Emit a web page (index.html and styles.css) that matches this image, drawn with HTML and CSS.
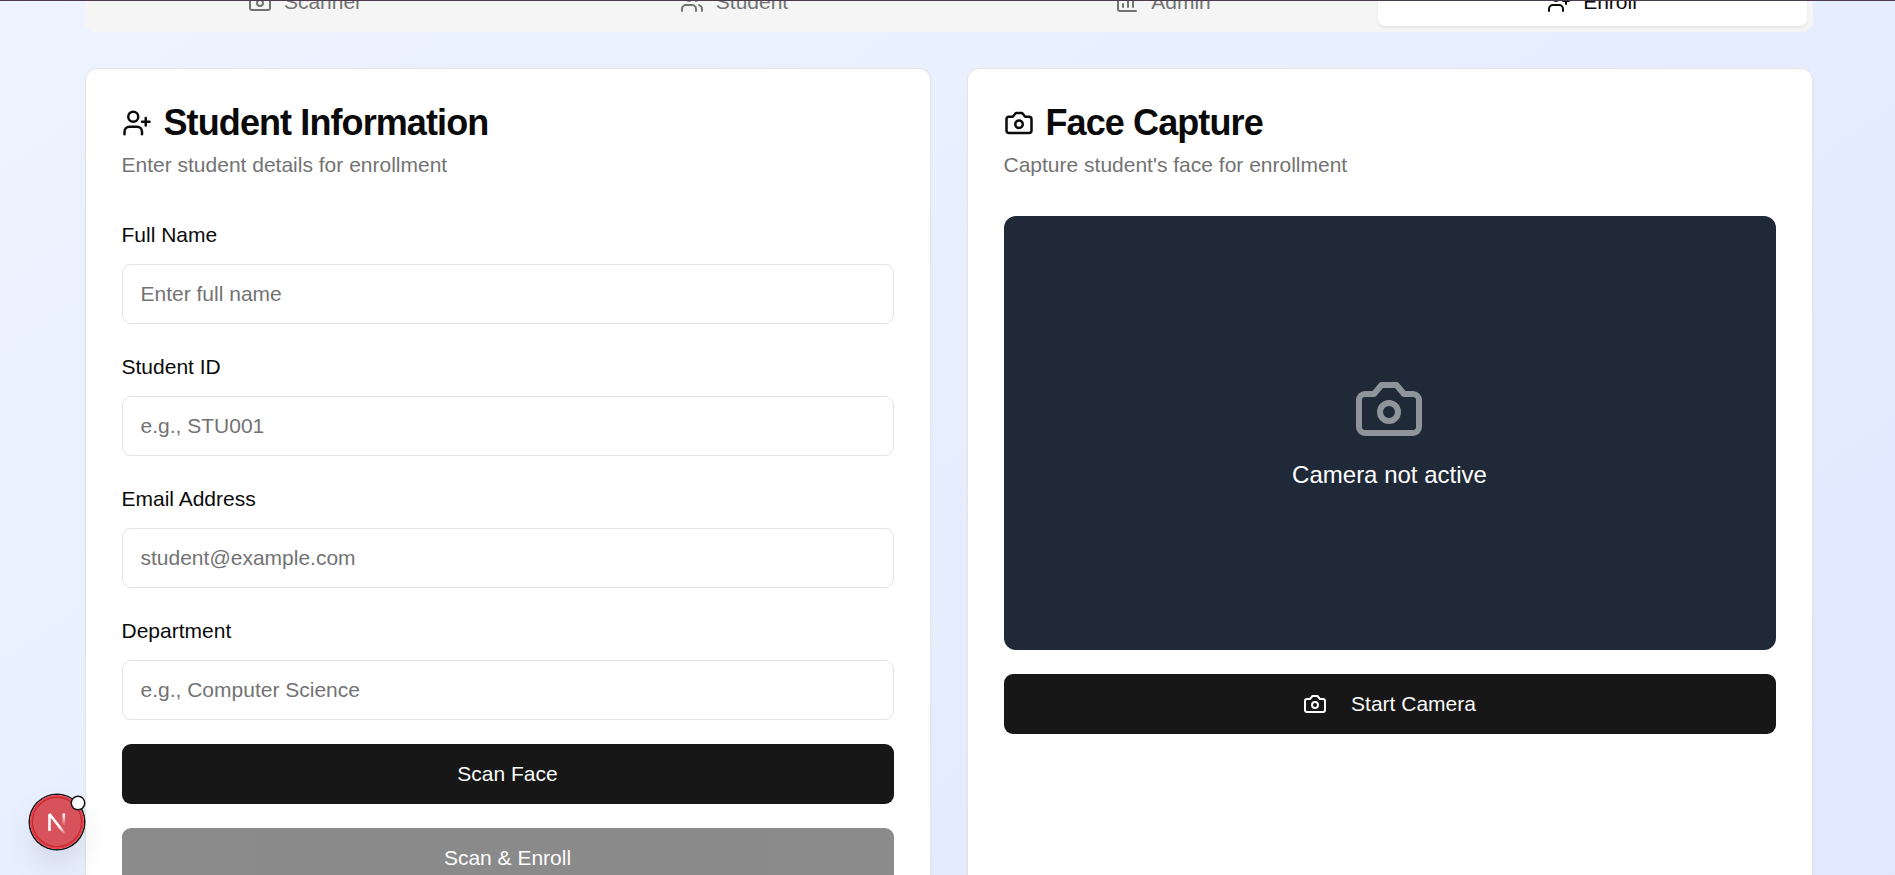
FILE: index.html
```html
<!DOCTYPE html>
<html lang="en">
<head>
<meta charset="utf-8">
<title>Student Enrollment</title>
<link rel="stylesheet" href="styles.css">
</head>
<body>
<svg class="defs" aria-hidden="true">
  <symbol id="camera" viewBox="0 0 24 24"><path d="M14.5 4h-5L7 7H4a2 2 0 0 0-2 2v9a2 2 0 0 0 2 2h16a2 2 0 0 0 2-2V9a2 2 0 0 0-2-2h-3l-2.500-3z"/><circle cx="12" cy="13" r="3"/></symbol>
  <symbol id="users" viewBox="0 0 24 24"><path d="M16 21v-2a4 4 0 0 0-4-4H6a4 4 0 0 0-4 4v2"/><circle cx="9" cy="7" r="4"/><path d="M22 21v-2a4 4 0 0 0-3-3.870"/><path d="M16 3.130a4 4 0 0 1 0 7.750"/></symbol>
  <symbol id="chart" viewBox="0 0 24 24"><path d="M3 3v16a2 2 0 0 0 2 2h16"/><path d="M18 17V9"/><path d="M13 17V5"/><path d="M8 17v-3"/></symbol>
  <symbol id="user-plus" viewBox="0 0 24 24"><path d="M16 21v-2a4 4 0 0 0-4-4H6a4 4 0 0 0-4 4v2"/><circle cx="9" cy="7" r="4"/><path d="M19 8v6"/><path d="M22 11h-6"/></symbol>
</svg>
<div class="page">
  <nav class="tabs">
    <button class="tab"><svg class="icon"><use href="#camera"/></svg>Scanner</button>
    <button class="tab"><svg class="icon"><use href="#users"/></svg>Student</button>
    <button class="tab"><svg class="icon"><use href="#chart"/></svg>Admin</button>
    <button class="tab active"><svg class="icon"><use href="#user-plus"/></svg>Enroll</button>
  </nav>
  <main class="grid">
    <section class="card">
      <header class="card-header">
        <h2 class="title"><svg class="icon icon-md"><use href="#user-plus"/></svg>Student Information</h2>
        <p class="description">Enter student details for enrollment</p>
      </header>
      <form class="stack">
        <div class="field"><div class="label-row"><label for="name">Full Name</label></div><input id="name" placeholder="Enter full name"></div>
        <div class="field"><div class="label-row"><label for="sid">Student ID</label></div><input id="sid" placeholder="e.g., STU001"></div>
        <div class="field"><div class="label-row"><label for="email">Email Address</label></div><input id="email" placeholder="student@example.com"></div>
        <div class="field"><div class="label-row"><label for="dept">Department</label></div><input id="dept" placeholder="e.g., Computer Science"></div>
        <button type="button" class="button">Scan Face</button>
        <button type="button" class="button" disabled>Scan &amp; Enroll</button>
      </form>
    </section>
    <section class="card">
      <header class="card-header">
        <h2 class="title"><svg class="icon icon-md"><use href="#camera"/></svg>Face Capture</h2>
        <p class="description">Capture student's face for enrollment</p>
      </header>
      <div class="stack">
        <div class="video"><svg class="icon icon-lg"><use href="#camera"/></svg><p class="video-text">Camera not active</p></div>
        <button type="button" class="button"><svg class="icon"><use href="#camera"/></svg>Start Camera</button>
      </div>
    </section>
  </main>
</div>
<div class="top-edge"></div>
<div class="dev-badge">
  <svg class="dev-logo" viewBox="0 0 54 54">
    <defs>
      <linearGradient id="diag" gradientUnits="userSpaceOnUse" x1="31" y1="31" x2="36" y2="39"><stop offset="0" stop-color="#fff"/><stop offset="1" stop-color="#fff" stop-opacity="0"/></linearGradient>
      <linearGradient id="stem" gradientUnits="userSpaceOnUse" x1="34" y1="19" x2="34" y2="31"><stop offset="0" stop-color="#fff"/><stop offset="1" stop-color="#fff" stop-opacity="0"/></linearGradient>
    </defs>
    <path d="M19.500 36V19L35 39" fill="none" stroke="url(#diag)" stroke-width="2.600" stroke-linejoin="bevel"/>
    <path d="M33.800 18.500V31" fill="none" stroke="url(#stem)" stroke-width="2.600"/>
  </svg>
  <span class="dev-dot"></span>
</div>
</body>
</html>
```
FILE: styles.css
```css
* { box-sizing: border-box; }
html, body { height: 100%; margin: 0; overflow: hidden; }
body { font-family: "Liberation Sans", Arial, sans-serif; font-size: 24px; line-height: 36px; color: #0a0a0a; }
button, input { font: inherit; }
h2, p { margin: 0; }
.defs { position: absolute; width: 0; height: 0; }
.page {
  height: 875px;
  overflow: hidden;
  padding: 0 82.500px 0 84.500px;
  background: linear-gradient(to bottom right, #eff6ff, #e0e7ff) 0 -330px / 1895px 1340px no-repeat;
}
.icon { width: 24px; height: 24px; flex: none; fill: none; stroke: currentColor; stroke-width: 2; stroke-linecap: round; stroke-linejoin: round; }
.icon-md { width: 30px; height: 30px; }
.icon-lg { width: 72px; height: 72px; opacity: .5; }
.tabs {
  display: grid;
  grid-template-columns: repeat(4, 1fr);
  height: 60px;
  margin-top: -28px;
  margin-bottom: 36px;
  padding: 6px;
  border-radius: 12px;
  background: #f5f5f5;
}
.tab {
  display: flex;
  align-items: center;
  justify-content: center;
  gap: 12px;
  padding: 9px 18px;
  border: 0;
  border-radius: 7px;
  background: none;
  color: #737373;
  font-size: 21px;
  line-height: 30px;
}
.tab.active { background: #fff; color: #0a0a0a; box-shadow: 0 1.5px 3px rgba(0, 0, 0, .07); }
.grid { display: grid; grid-template-columns: 1fr 1fr; gap: 36px; }
.card {
  height: 960px;
  padding: 36px;
  border: 1px solid #e5e5e5;
  border-radius: 12px;
  background: #fff;
  box-shadow: 0 1.5px 3px rgba(0, 0, 0, .05);
}
.card-header { display: flex; flex-direction: column; gap: 9px; margin-bottom: 36px; }
.title { display: flex; align-items: center; gap: 12px; height: 36px; font-size: 36px; line-height: 36px; font-weight: 700; letter-spacing: -0.9px; }
.description { font-size: 21px; line-height: 30px; color: #737373; }
.stack { display: flex; flex-direction: column; gap: 24px; }
.label-row { height: 36px; margin-bottom: 12px; }
.label-row label { font-size: 21px; line-height: 21px; }
.field input {
  display: block;
  width: 100%;
  height: 60px;
  padding: 12px 18px;
  border: 1px solid #e5e5e5;
  border-radius: 9px;
  background: #fff;
  font-size: 21px;
  line-height: 30px;
}
.field input::placeholder { color: #737373; }
.button {
  display: flex;
  align-items: center;
  justify-content: center;
  gap: 24px;
  height: 60px;
  border: 0;
  border-radius: 9px;
  background: #171717;
  color: #fafafa;
  font-size: 21px;
  line-height: 30px;
}
.button:disabled { opacity: .5; }
.video {
  display: flex;
  flex-direction: column;
  align-items: center;
  justify-content: center;
  gap: 12px;
  height: 434px;
  border-radius: 12px;
  background: #1f2937;
  color: #fff;
}
.video .icon { margin-right: 1px; }
.top-edge { position: absolute; top: 0; left: 0; right: 0; height: 1px; background: #4b3d4c; }
.dev-badge {
  position: absolute;
  left: 30px;
  top: 795px;
  width: 54px;
  height: 54px;
  border-radius: 50%;
  background: radial-gradient(circle, #d7525a 0 23.500px, #c92a31 24.200px 24.800px, #e5404a 25.500px);
  box-shadow: 0 0 0 1.500px #171717, 0 16px 36px -8px rgba(0, 0, 0, .2);
}
.dev-logo { display: block; width: 54px; height: 54px; }
.dev-dot { position: absolute; right: 0; top: 2px; width: 12px; height: 12px; border-radius: 50%; background: #fff; box-shadow: 0 0 0 1.500px #171717; }
```
